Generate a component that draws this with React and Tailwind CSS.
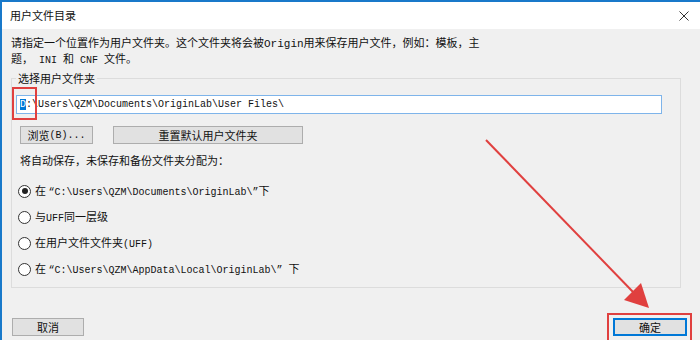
import React from 'react';

// Latin runs in the dialog use a monospaced face, like SimSun's half-width glyphs
const mono = "font-['Liberation_Mono'] text-[10px]";

const Btn = ({ children, className = '' }) => (
    <div
        className={`h-[18px] flex items-center justify-center bg-[#e1e1e1] border border-[#adadad] ${className}`}
    >
        {children}
    </div>
);

const Radio = ({ checked, children }) => (
    <div className="h-[26px] flex items-center">
        <div className="ml-[6px] w-[13px] h-[13px] rounded-full border border-[#333] bg-white flex items-center justify-center shrink-0">
            {checked && <div className="w-[6px] h-[6px] rounded-full bg-[#222]" />}
        </div>
        <div className="ml-[4px] whitespace-nowrap">{children}</div>
    </div>
);

export default function App() {
    return (
        <div className="relative w-[700px] h-[340px] overflow-hidden bg-[#f0f0f0] border-l-2 border-t-2 border-[#1979ca] font-['Noto_Sans_CJK_SC','Noto_Sans',sans-serif] text-[11px] leading-[13px] text-[#111]">
            {/* title bar */}
            <div className="h-[27px] bg-white flex items-center justify-between pl-2 pr-[11px]">
                <span className="text-[11px]">用户文件目录</span>
                <svg width="10" height="10" viewBox="0 0 10 10">
                    <path d="M0.5 0.5L9.5 9.5M9.5 0.5L0.5 9.5" stroke="#333" strokeWidth="1" />
                </svg>
            </div>

            {/* description */}
            <div className="pt-[5px] pl-[9px] whitespace-nowrap leading-[16px]">
                <div className="h-[16px]">
                    请指定一个位置作为用户文件夹。这个文件夹将会被<span className="font-['Liberation_Mono']">Origin</span>用来保存用户文件，例如：模板，主
                </div>
                <div className="h-[16px]">
                    题，<span className={mono}> INI </span>和<span className={mono}> CNF </span>文件。
                </div>
            </div>

            {/* group box */}
            <fieldset className="ml-[9px] mt-[6px] w-[670px] border border-[#dcdcdc] pb-[5px]">
                <legend className="ml-[4px] px-[2px] h-[13px]">选择用户文件夹</legend>

                <div className="mt-[10px] ml-[4px] mr-[18px] h-[19px] bg-white border border-[#7eb4ea] flex items-center pl-[3px]">
                    <span className={`${mono} whitespace-nowrap`}>
                        <span className="bg-[#0078d7] text-white">D</span>:\Users\QZM\Documents\OriginLab\User Files\
                    </span>
                </div>

                <div className="mt-[12px] ml-[8px] flex gap-[20px]">
                    <Btn className="w-[73px]">
                        浏览<span className={mono}>(B)...</span>
                    </Btn>
                    <Btn className="w-[190px]">重置默认用户文件夹</Btn>
                </div>

                <div className="mt-[10px] ml-[8px] h-[13px]">将自动保存，未保存和备份文件夹分配为：</div>

                <div className="mt-[11px] flex flex-col">
                    <Radio checked>
                        在 <span className={mono}>“C:\Users\QZM\Documents\OriginLab\”</span>下
                    </Radio>
                    <Radio>
                        与<span className={mono}>UFF</span>同一层级
                    </Radio>
                    <Radio>
                        在用户文件文件夹<span className={mono}>(UFF)</span>
                    </Radio>
                    <Radio>
                        在 <span className={mono}>“C:\Users\QZM\AppData\Local\OriginLab\” </span>下
                    </Radio>
                </div>
            </fieldset>

            {/* footer buttons */}
            <div className="mt-[30px] ml-[10px] w-[675px] flex justify-between">
                <Btn className="w-[72px]">取消</Btn>
                <div className="w-[74px] h-[18px] flex items-center justify-center bg-[#e1e1e1] border border-[#0078d7] shadow-[inset_0_0_0_1px_#0078d7]">
                    确定
                </div>
            </div>

            {/* annotation overlay */}
            <svg className="absolute left-[-2px] top-[-2px] pointer-events-none" width="700" height="340">
                <rect x="13" y="88" width="23" height="31" fill="none" stroke="#e0403f" strokeWidth="2" />
                <rect x="608" y="314" width="83" height="30" fill="none" stroke="#e0403f" strokeWidth="2" />
                <line x1="486" y1="140" x2="634" y2="293" stroke="#e0403f" strokeWidth="2" />
                <polygon points="649,308 624,300 641,283" fill="#e0403f" />
            </svg>
        </div>
    );
}
